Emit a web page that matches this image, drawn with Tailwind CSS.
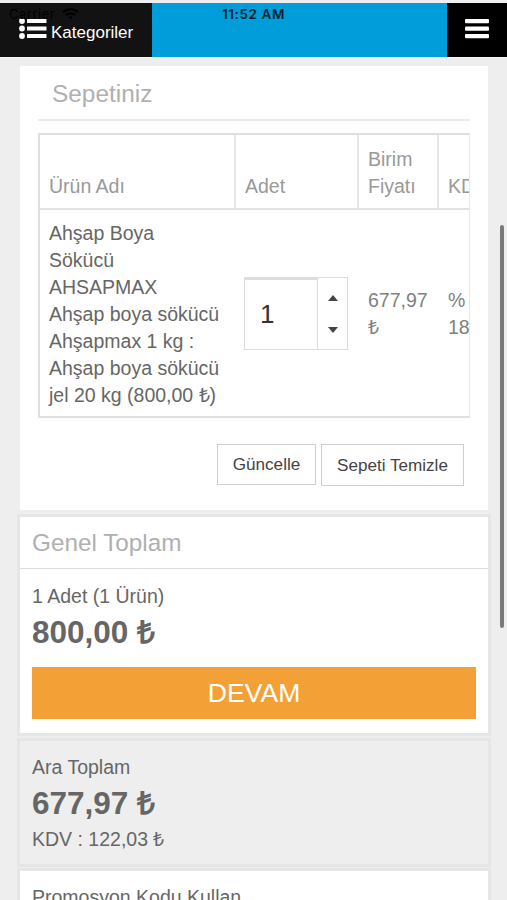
<!DOCTYPE html>
<html lang="tr">
<head>
    <meta charset="UTF-8">
    <meta name="viewport" content="width=device-width, initial-scale=1.0">
    <title>Sepetiniz</title>
    <script src="https://cdn.jsdelivr.net/npm/@tailwindcss/browser@4"></script>
</head>
<body class="relative h-[900px] overflow-hidden bg-[#eeeeee] font-['Liberation_Sans',Arial,sans-serif] text-[19.5px] leading-[27px] text-[#666666]">

    <!-- Header -->
    <header class="flex h-[58px] border-t-3 border-b border-t-[#eeeeee] border-b-[#f6f6f6] bg-[#009dda]">
        <button class="flex w-[152px] items-start bg-[#121212] pl-[19px] pt-[15px] text-white">
            <svg class="mr-[4px] h-[22px] w-[28px]" viewBox="0 0 28 22" fill="currentColor">
                <circle cx="3" cy="3" r="2.9" />
                <circle cx="3" cy="10.5" r="2.9" />
                <circle cx="3" cy="18" r="2.9" />
                <rect x="8" y="1" width="19.5" height="4" rx="0.5" />
                <rect x="8" y="8.5" width="19.5" height="4" rx="0.5" />
                <rect x="8" y="16" width="19.5" height="4" rx="0.5" />
            </svg>
            <span class="text-[17px] leading-[30px]">Kategoriler</span>
        </button>
        <div class="flex-1"></div>
        <button class="flex w-[60px] justify-center bg-black pt-[16px] text-white">
            <svg class="h-[20px] w-[24px]" viewBox="0 0 24 20" fill="currentColor">
                <rect x="0" y="0" width="24" height="4.2" rx="1" />
                <rect x="0" y="7.5" width="24" height="4.2" rx="1" />
                <rect x="0" y="15" width="24" height="4.2" rx="1" />
            </svg>
        </button>
    </header>

    <!-- Status bar over the header -->
    <div class="absolute left-[9px] top-[4px] flex items-center gap-[7px] font-[Inter,sans-serif] text-[13px] leading-[20px] tracking-[0.5px] text-black">
        <span>Carrier</span>
        <svg class="h-[12px] w-[17px]" viewBox="0 0 17 12" fill="none" stroke="currentColor" stroke-width="2.2">
            <path d="M1 4.2a11 11 0 0 1 15 0" />
            <path d="M3.8 7.2a7 7 0 0 1 9.4 0" />
            <path d="M6.5 9.2a3 3 0 0 1 4 0L8.5 11z" fill="currentColor" stroke="none" />
        </svg>
    </div>
    <div class="absolute left-0 top-[4px] w-full text-center font-[Inter,sans-serif] text-[13.5px] font-semibold leading-[20px] tracking-[0.6px] text-[#04202b]">11:52 AM</div>

    <main class="ml-[20px] mr-[19px] mt-[8px] flex flex-col gap-[7px]">
        <!-- Cart -->
        <section class="h-[444px] bg-white px-[18px]">
            <h2 class="h-[55px] border-b-2 border-[#ebebeb] pl-[14px] text-[24.4px] leading-[55px] text-[#b0b0b0]">Sepetiniz</h2>
            <div class="mt-[12px] h-[285px] overflow-hidden border-2 border-r border-[#e0e0e0] border-r-[#e8e8e8]">
                <table class="w-[500px] table-fixed border-collapse text-left">
                    <colgroup>
                        <col class="w-[195px]">
                        <col class="w-[123px]">
                        <col class="w-[80px]">
                        <col>
                    </colgroup>
                    <thead>
                        <tr class="h-[74px] border-b-2 border-[#e2e2e2] align-bottom text-[#999999]">
                            <th class="border-r-2 border-[#e6e6e6] pb-[8px] pl-[9px] font-normal">Ürün Adı</th>
                            <th class="border-r-2 border-[#e6e6e6] pb-[8px] pl-[9px] font-normal">Adet</th>
                            <th class="border-r-2 border-[#e6e6e6] pb-[8px] pl-[9px] font-normal">Birim Fiyatı</th>
                            <th class="pb-[8px] pl-[9px] font-normal">KDV</th>
                        </tr>
                    </thead>
                    <tbody>
                        <tr class="h-[208px]">
                            <td class="whitespace-nowrap pl-[9px] pt-[2px]">
                                Ahşap Boya<br>Sökücü<br>AHSAPMAX<br>Ahşap boya sökücü<br>Ahşapmax 1 kg :<br>Ahşap boya sökücü<br>jel 20 kg (800,00 ₺)
                            </td>
                            <td class="pl-[9px]">
                                <div class="flex h-[73px] w-[104px] border border-[#dddddd]">
                                    <div class="w-[73px] border-r border-t-2 border-[#dddddd] pl-[15px] text-[26px] leading-[68px] text-[#333333]">1</div>
                                    <div class="flex flex-1 flex-col items-center justify-center gap-[26px] text-[#444444]">
                                        <svg class="h-[6px] w-[10px]" viewBox="0 0 10 6" fill="currentColor"><path d="M5 0l5 6H0z" /></svg>
                                        <svg class="h-[6px] w-[10px]" viewBox="0 0 10 6" fill="currentColor"><path d="M0 0h10L5 6z" /></svg>
                                    </div>
                                </div>
                            </td>
                            <td class="pl-[10px] text-[#808080]">677,97<br>₺</td>
                            <td class="pl-[10px] text-[#808080]">%<br>18</td>
                        </tr>
                    </tbody>
                </table>
            </div>
            <div class="mt-[25px] flex justify-end gap-[5px] pr-[6px] text-[17.1px] text-[#444444]">
                <button class="mt-px h-[41px] w-[99px] border border-[#cecece]">Güncelle</button>
                <button class="mt-px h-[42px] w-[143px] border border-[#cecece]">Sepeti Temizle</button>
            </div>
        </section>

        <!-- Grand total -->
        <section class="h-[216px] bg-white shadow-[0_0_0_3px_#e6e6e6]">
            <h2 class="h-[52px] border-b border-[#dddddd] pl-[12px] text-[24.3px] leading-[52px] text-[#b0b0b0]">Genel Toplam</h2>
            <div class="px-[12px] pt-[14px]">
                <p>1 Adet (1 Ürün)</p>
                <p class="text-[31.5px] font-bold leading-[45px]">800,00 ₺</p>
                <button class="mt-[12px] h-[52px] w-full bg-[#f3a136] text-[26.6px] text-white">DEVAM</button>
            </div>
        </section>

        <!-- Subtotal -->
        <section class="mt-px h-[123px] bg-[#eeeeee] px-[12px] pt-[13px] shadow-[0_0_0_3px_#e6e6e6]">
            <p>Ara Toplam</p>
            <p class="text-[31.5px] font-bold leading-[45px]">677,97 ₺</p>
            <p>KDV : 122,03 ₺</p>
        </section>

        <!-- Promo code -->
        <section class="h-[60px] bg-white px-[12px] pt-[13px] shadow-[0_0_0_3px_#e6e6e6]">
            <p>Promosyon Kodu Kullan</p>
        </section>
    </main>

    <!-- Scroll indicator -->
    <div class="absolute left-[500px] top-[225px] h-[403px] w-[4px] rounded-full bg-[#7a7a7a]"></div>
</body>
</html>
